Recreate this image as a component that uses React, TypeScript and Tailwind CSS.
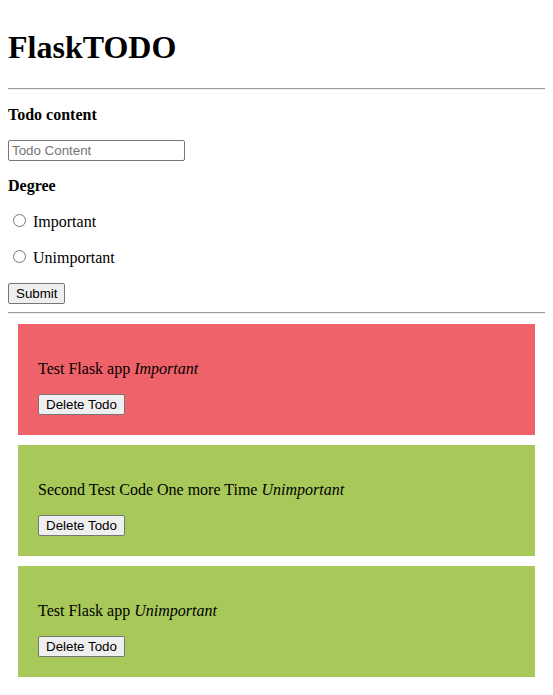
import React from "react";

const btn =
  "font-['Liberation_Sans',Arial,sans-serif] text-[13.333px] leading-[normal] text-black bg-[#efefef] border border-[#767676] rounded-[2px] px-[7px] py-[2px] align-baseline";

const todos = [
  { text: "Test Flask app", degree: "Important", bg: "bg-[#f0626a]" },
  { text: "Second Test Code One more Time", degree: "Unimportant", bg: "bg-[#a8c95a]" },
  { text: "Test Flask app", degree: "Unimportant", bg: "bg-[#a8c95a]" },
];

export default function App() {
  return (
    <div className="p-2 bg-white text-black font-['Liberation_Serif','Times_New_Roman',serif] text-[16px] leading-[normal] min-h-[695px]">
      <h1 className="text-[32px] font-bold my-[21.44px] leading-[normal]">FlaskTODO</h1>
      <hr className="my-2 border-t border-t-[#9a9a9a] border-b border-b-[#eeeeee]" />
      <form>
        <p className="my-4 font-bold">Todo content</p>
        <p className="my-4">
          <input
            type="text"
            placeholder="Todo Content"
            className="w-[177px] h-[21px] px-[3px] py-[2px] border border-[#767676] rounded-[2px] font-['Liberation_Sans',Arial,sans-serif] text-[13.333px] leading-[normal] placeholder:text-[#757575] align-baseline"
          />
        </p>
        <p className="my-4 font-bold">Degree</p>
        <p className="my-4">
          <input type="radio" name="degree" className="m-[3px_3px_0_5px] w-[13px] h-[13px]" /> Important
        </p>
        <p className="my-4">
          <input type="radio" name="degree" className="m-[3px_3px_0_5px] w-[13px] h-[13px]" /> Unimportant
        </p>
        <button type="button" className={btn}>Submit</button>
      </form>
      <hr className="my-2 border-t border-t-[#9a9a9a] border-b border-b-[#eeeeee]" />
      {todos.map((t, i) => (
        <div key={i} className={`m-[10px] p-5 ${t.bg}`}>
          <p className="my-4">
            {t.text} <i>{t.degree}</i>
          </p>
          <form>
            <button type="button" className={btn}>Delete Todo</button>
          </form>
        </div>
      ))}
    </div>
  );
}
